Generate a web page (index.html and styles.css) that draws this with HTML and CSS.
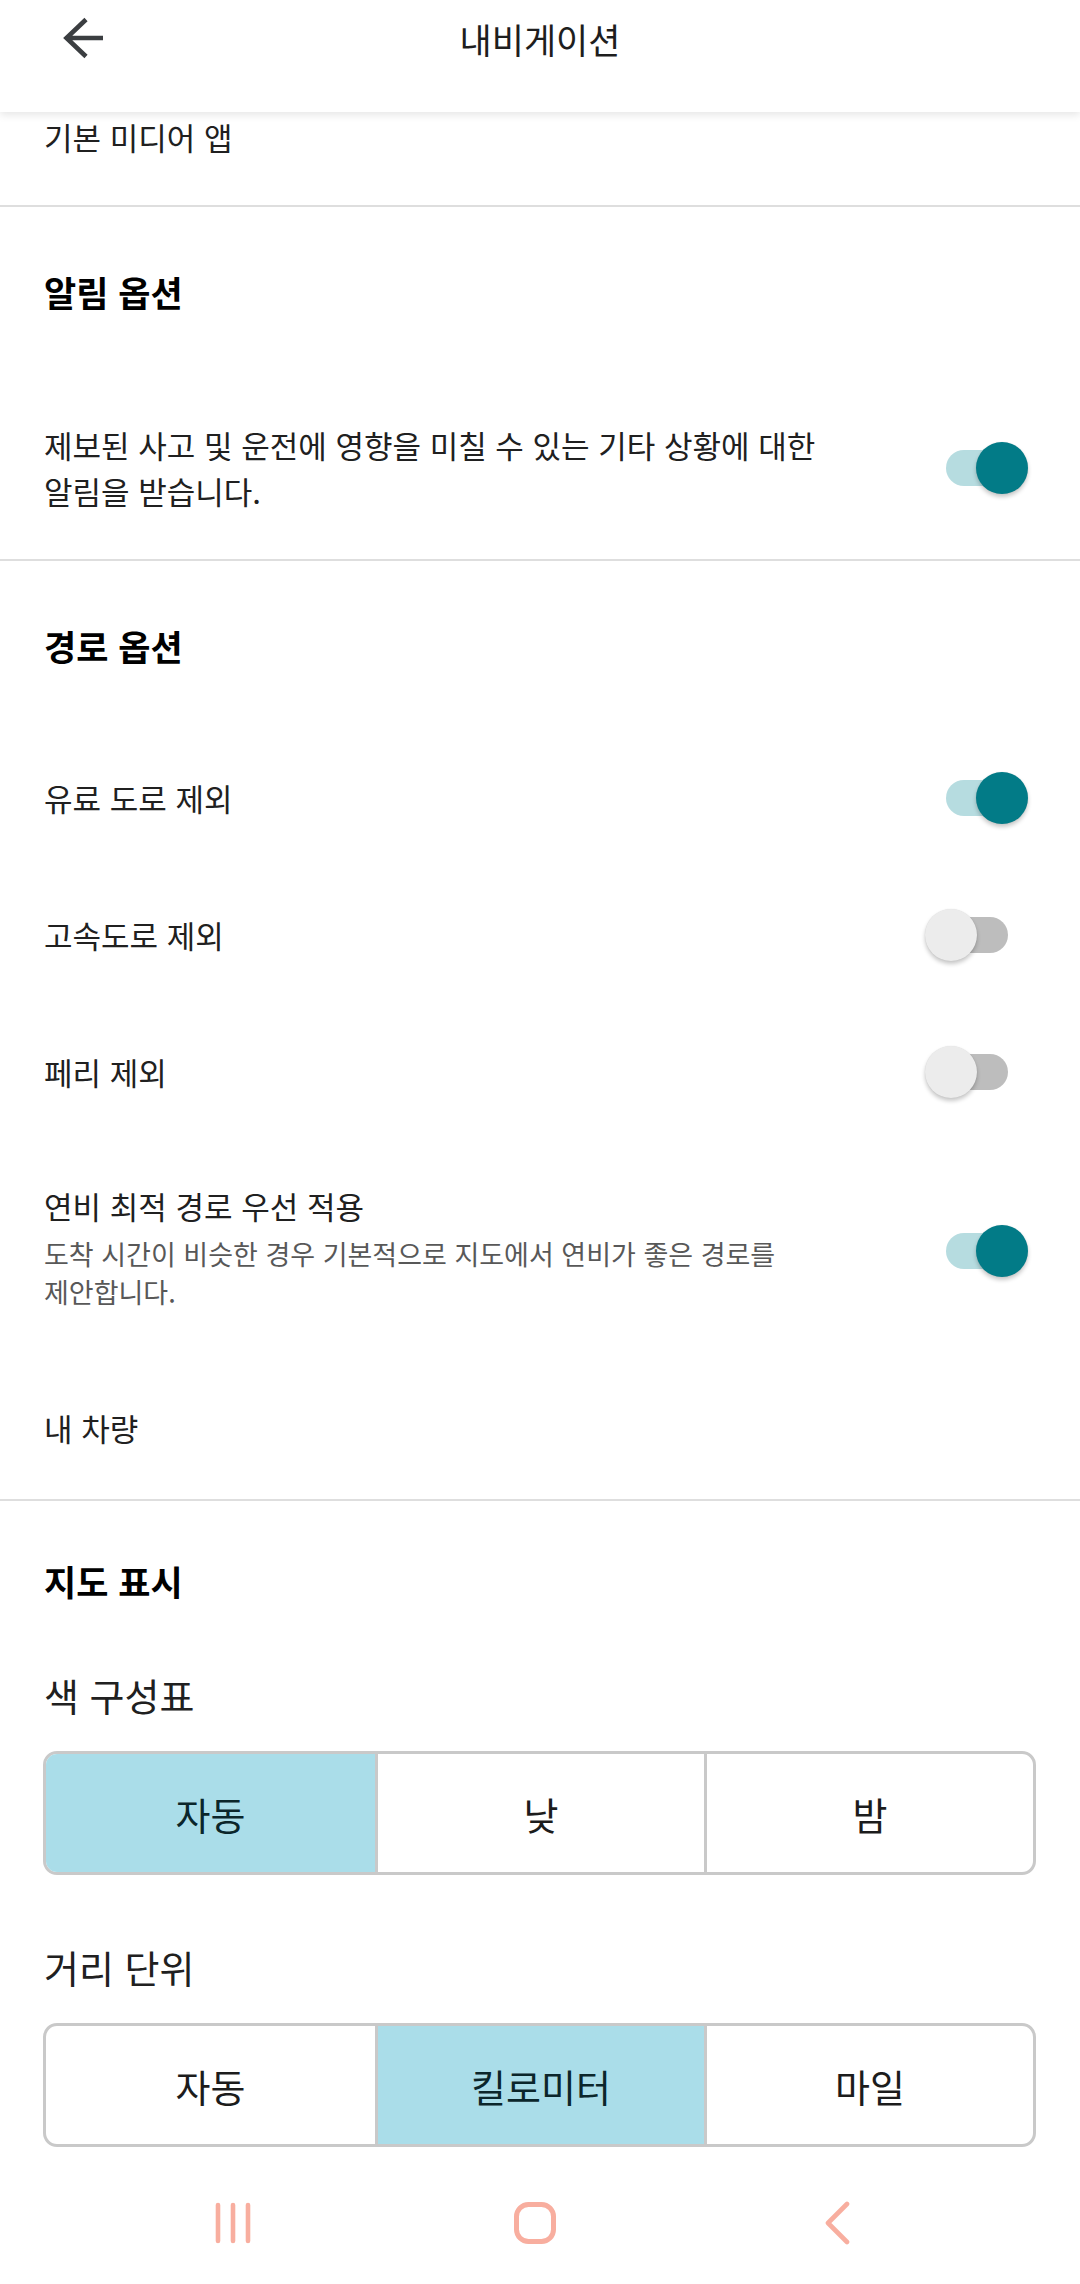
FILE: index.html
```html
<!DOCTYPE html>
<html lang="ko">
<head>
<meta charset="utf-8">
<title>내비게이션</title>
<link rel="stylesheet" href="styles.css">
</head>
<body>
<div class="screen">
  <header class="appbar">
    <div class="appbar-left">
      <svg class="back-icon" viewBox="0 0 44 44" width="44" height="44" aria-hidden="true">
        <path d="M42 22H6M25 3.5L5.5 22L25 40.5" fill="none" stroke="#3b3e41" stroke-width="4.6"/>
      </svg>
    </div>
    <div class="appbar-title">내비게이션</div>
    <div class="appbar-right"></div>
  </header>

  <main class="content">
    <div class="row-top">기본 미디어 앱</div>
    <div class="divider"></div>

    <section class="section">
      <h2 class="section-title">알림 옵션</h2>
      <div class="row row-alert">
        <div class="row-text">
          <div class="row-label row-label-multi">제보된 사고 및 운전에 영향을 미칠 수 있는 기타 상황에 대한 알림을 받습니다.</div>
        </div>
        <div class="toggle on"><span class="track"></span><span class="thumb"></span></div>
      </div>
    </section>
    <div class="divider"></div>

    <section class="section">
      <h2 class="section-title">경로 옵션</h2>
      <div class="row">
        <div class="row-text"><div class="row-label">유료 도로 제외</div></div>
        <div class="toggle on"><span class="track"></span><span class="thumb"></span></div>
      </div>
      <div class="row">
        <div class="row-text"><div class="row-label">고속도로 제외</div></div>
        <div class="toggle"><span class="track"></span><span class="thumb"></span></div>
      </div>
      <div class="row">
        <div class="row-text"><div class="row-label">페리 제외</div></div>
        <div class="toggle"><span class="track"></span><span class="thumb"></span></div>
      </div>
      <div class="row row-detail">
        <div class="row-text">
          <div class="row-label">연비 최적 경로 우선 적용</div>
          <div class="row-sub">도착 시간이 비슷한 경우 기본적으로 지도에서 연비가 좋은 경로를 제안합니다.</div>
        </div>
        <div class="toggle on"><span class="track"></span><span class="thumb"></span></div>
      </div>
      <div class="row row-plain">
        <div class="row-text"><div class="row-label">내 차량</div></div>
      </div>
    </section>
    <div class="divider"></div>

    <section class="section section-map">
      <h2 class="section-title">지도 표시</h2>
      <div class="field field-first">
        <div class="field-label">색 구성표</div>
        <div class="segmented">
          <div class="segment selected">자동</div>
          <div class="segment">낮</div>
          <div class="segment">밤</div>
        </div>
      </div>
      <div class="field field-next">
        <div class="field-label">거리 단위</div>
        <div class="segmented">
          <div class="segment">자동</div>
          <div class="segment selected">킬로미터</div>
          <div class="segment">마일</div>
        </div>
      </div>
    </section>
  </main>

  <nav class="navbar">
    <div class="nav-cell">
      <svg viewBox="0 0 36 42" width="36" height="42" aria-hidden="true">
        <path d="M3 3V39M18 3V39M33 3V39" fill="none" stroke="#f8ae9f" stroke-width="4.6" stroke-linecap="round"/>
      </svg>
    </div>
    <div class="nav-cell">
      <svg viewBox="0 0 46 44" width="46" height="44" aria-hidden="true">
        <rect x="4.5" y="3.5" width="37" height="37" rx="12" fill="none" stroke="#f8ae9f" stroke-width="5"/>
      </svg>
    </div>
    <div class="nav-cell">
      <svg viewBox="0 0 28 44" width="28" height="44" aria-hidden="true">
        <path d="M24 3L5 22L24 41" fill="none" stroke="#f8ae9f" stroke-width="4.6" stroke-linecap="round" stroke-linejoin="round"/>
      </svg>
    </div>
  </nav>
</div>
</body>
</html>
```

FILE: styles.css
```css
* {
  box-sizing: border-box;
}

html, body {
  margin: 0;
  padding: 0;
  background: #ffffff;
}

body {
  font-family: "Noto Sans CJK KR", "Noto Sans", sans-serif;
  color: #202020;
  word-break: keep-all;
}

.screen {
  width: 1080px;
  height: 2284px;
  display: flex;
  flex-direction: column;
  overflow: hidden;
  background: #ffffff;
}

/* App bar */
.appbar {
  position: relative;
  z-index: 2;
  height: 112px;
  flex: 0 0 112px;
  display: grid;
  grid-template-columns: 1fr auto 1fr;
  align-items: start;
  padding-top: 14px;
  background: #ffffff;
  box-shadow: 0 3px 8px rgba(0, 0, 0, 0.10);
}

.appbar-left {
  height: 50px;
  display: flex;
  align-items: center;
  padding-left: 61px;
}

.back-icon {
  display: block;
  margin-top: -2px;
}

.appbar-title {
  font-size: 35px;
  line-height: 50px;
  color: #1e1e1e;
  text-align: center;
}

/* Content */
.content {
  flex: 1 1 auto;
  overflow: hidden;
  position: relative;
  z-index: 1;
}

.row-top {
  height: 93px;
  padding: 0 44px;
  font-size: 31px;
  line-height: 50px;
  color: #202020;
}

.divider {
  height: 2px;
  background: #dedede;
}

.section {
  display: flex;
  flex-direction: column;
}

.section-title {
  margin: 0;
  padding: 60px 44px 0;
  font-size: 35px;
  font-weight: 700;
  line-height: 50px;
  color: #000000;
}

.section > .section-title + .row {
  margin-top: 58px;
}

.row {
  display: flex;
  align-items: center;
  padding: 44px 51px 43px 44px;
}

.row-alert {
  padding-top: 47px;
  padding-bottom: 45px;
}

.row-detail {
  padding-top: 41px;
  padding-bottom: 51px;
}

.row-detail .toggle {
  margin-top: 10px;
}

.row-plain {
  padding-top: 41px;
  padding-bottom: 46px;
}

.row-text {
  flex: 1 1 auto;
  max-width: 790px;
}

.row-label {
  font-size: 31px;
  line-height: 50px;
  color: #202020;
}

.row-label-multi {
  line-height: 46px;
}

.row-sub {
  margin-top: 4px;
  font-size: 27px;
  line-height: 38px;
  color: #585858;
}

/* Toggle */
.toggle {
  position: relative;
  flex: 0 0 104px;
  width: 104px;
  height: 50px;
  margin-left: auto;
}

.toggle .track {
  position: absolute;
  left: 21px;
  top: 7px;
  width: 62px;
  height: 36px;
  border-radius: 18px;
  background: #bdbdbd;
}

.toggle .thumb {
  position: absolute;
  left: 0;
  top: -1px;
  width: 52px;
  height: 52px;
  border-radius: 50%;
  background: #ececec;
  box-shadow: 0 3px 4px rgba(0, 0, 0, 0.22), 0 0 1px rgba(0, 0, 0, 0.12);
}

.toggle.on .track {
  background: #b6dce0;
}

.toggle.on .thumb {
  left: 51px;
  background: #027b87;
}

/* Map display */
.section-map .section-title {
  padding-top: 55px;
}

.field {
  padding: 0 44px 0 43px;
}

.field-first {
  margin-top: 64px;
}

.field-next {
  margin-top: 67px;
}

.field-label {
  font-size: 38px;
  line-height: 50px;
  color: #202020;
  margin-bottom: 31px;
  padding-left: 1px;
}

.segmented {
  display: grid;
  grid-template-columns: 1fr 1fr 1fr;
  height: 124px;
  border: 3px solid #c9c9c9;
  border-radius: 14px;
  overflow: hidden;
  background: #ffffff;
}

.segment {
  display: flex;
  align-items: center;
  justify-content: center;
  font-size: 38px;
  color: #1c1c1c;
}

.segment + .segment {
  border-left: 3px solid #c9c9c9;
}

.segment.selected {
  background: #aadde9;
  color: #0b262b;
}

/* System nav bar */
.navbar {
  flex: 0 0 122px;
  height: 122px;
  display: grid;
  grid-template-columns: 302px 302px 302px;
  padding-left: 82px;
  align-items: center;
  background: #ffffff;
}

.nav-cell {
  display: flex;
  align-items: center;
  justify-content: center;
}

.nav-cell svg {
  display: block;
}
```
